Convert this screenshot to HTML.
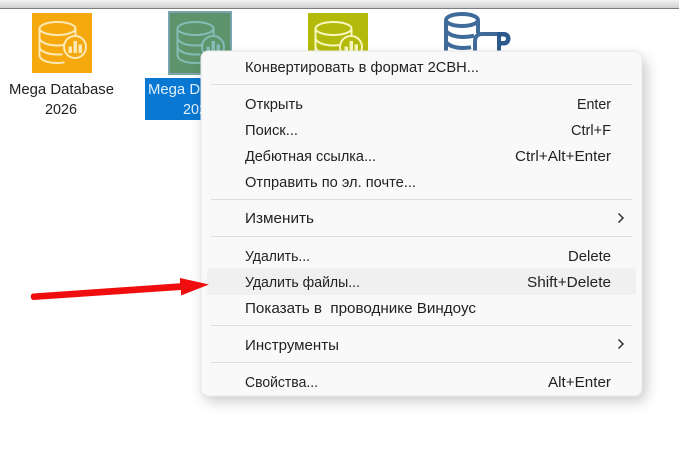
<!DOCTYPE html>
<html><head><meta charset="utf-8"><style>
html,body{margin:0;padding:0;background:#fff;width:679px;height:449px;overflow:hidden}
svg{display:block;position:absolute;left:0;top:0}
text{font-family:"Liberation Sans","DejaVu Sans",sans-serif;font-size:14.5px;fill:#222}
</style></head><body>
<svg width="679" height="449" viewBox="0 0 679 449" xmlns="http://www.w3.org/2000/svg">
<defs>
<linearGradient id="top" x1="0" y1="0" x2="0" y2="1"><stop offset="0" stop-color="#f3f3f3"/><stop offset="1" stop-color="#cfcfcf"/></linearGradient>
<filter id="sh" x="-10%" y="-10%" width="125%" height="125%"><feGaussianBlur stdDeviation="7"/></filter>
<g id="db" fill="none" stroke-width="2">
<ellipse cx="25.500" cy="15.500" rx="18" ry="6.500"/>
<path d="M7.500 15.500V42C7.500 47 15 50 25.500 50C28 50 30.500 49.800 32.500 49.300M7.500 24.500C7.500 29 15 32.500 25.500 32.500C28 32.500 29.500 32.300 31.500 32M7.500 33.500C7.500 38 15 41.500 25.500 41.500C27.500 41.500 29 41.400 30.500 41.200M43.500 15.500V22.500"/>
<circle cx="43" cy="34" r="11"/>
<path d="M36.500 40V33.500h3.500V40zM41.500 40V28h3.500v12zM46.500 40V31.500H50V40z" fill="currentColor" stroke="none"/>
</g>
</defs>
<rect x="0" y="0" width="679" height="8" fill="url(#top)"/>
<rect x="0" y="8" width="679" height="1" fill="#7d7d7d"/>

<rect x="32" y="13" width="60" height="60" fill="#f6a80f"/>
<use href="#db" x="32" y="13" stroke="#fde9b5" color="#fde9b5"/>
<text x="9" y="94" textLength="105" lengthAdjust="spacingAndGlyphs">Mega Database</text>
<text x="45" y="114" textLength="32" lengthAdjust="spacingAndGlyphs">2026</text>

<rect x="168" y="11" width="64" height="64" fill="#7ba5ae"/>
<rect x="170" y="13" width="60" height="60" fill="#5d946c"/>
<use href="#db" x="170" y="13" stroke="#83bdb8" color="#83bdb8"/>
<rect x="145" y="78" width="70" height="42" fill="#0978d2"/>
<text x="148" y="94" textLength="105" lengthAdjust="spacingAndGlyphs" style="fill:#dff0fb">Mega Database</text>
<text x="183" y="114" textLength="32" lengthAdjust="spacingAndGlyphs" style="fill:#dff0fb">2026</text>

<rect x="308" y="13" width="60" height="60" fill="#b4ba0b"/>
<use href="#db" x="308" y="13" stroke="#f8f7bd" color="#f8f7bd"/>

<g fill="none" stroke="#3f6b9a" stroke-width="4">
<ellipse cx="462" cy="20" rx="16" ry="6"/>
<path d="M446 20V53M478 20V33M446 31C449 35 456 37 462 37C467 37 471 36.500 474 35.500M446 42C449 46 456 48 462 48C465 48 468 47.800 471 47.300"/>
<path d="M475 54V42C475 37 477 34 482 34H499"/>
</g>
<path d="M497 32H504C508 32 510.500 35 510.500 38.500C510.500 42.500 508 45.500 504 45.500H501V54H497ZM501 36.500V41H503.500C505 41 506 40 506 38.700C506 37.400 505 36.500 503.500 36.500Z" fill="#2b5a8c" fill-rule="evenodd"/>

<rect x="204" y="58" width="442" height="343" rx="8" fill="#000" opacity=".22" filter="url(#sh)"/>
<rect x="201" y="51" width="441" height="345" rx="7" fill="#f9f9f9" stroke="#e8e8e8" stroke-width="1"/>

<g fill="#dedede">
<rect x="211" y="84" width="421" height="1"/>
<rect x="211" y="199" width="421" height="1"/>
<rect x="211" y="236" width="421" height="1"/>
<rect x="211" y="325" width="421" height="1"/>
<rect x="211" y="362" width="421" height="1"/>
</g>
<rect x="207" y="268" width="429" height="27" rx="4" fill="#f0f0f0"/>

<text x="245" y="72" textLength="234" lengthAdjust="spacingAndGlyphs">Конвертировать в формат 2CBH...</text>
<text x="245" y="109" textLength="58" lengthAdjust="spacingAndGlyphs">Открыть</text>
<text x="245" y="135" textLength="53" lengthAdjust="spacingAndGlyphs">Поиск...</text>
<text x="245" y="161" textLength="131" lengthAdjust="spacingAndGlyphs">Дебютная ссылка...</text>
<text x="245" y="187" textLength="171" lengthAdjust="spacingAndGlyphs">Отправить по эл. почте...</text>
<text x="245" y="223" textLength="69" lengthAdjust="spacingAndGlyphs">Изменить</text>
<text x="245" y="261" textLength="65" lengthAdjust="spacingAndGlyphs">Удалить...</text>
<text x="245" y="287" textLength="115" lengthAdjust="spacingAndGlyphs">Удалить файлы...</text>
<text x="245" y="313" textLength="231" lengthAdjust="spacingAndGlyphs" xml:space="preserve">Показать в  проводнике Виндоус</text>
<text x="245" y="350" textLength="94" lengthAdjust="spacingAndGlyphs">Инструменты</text>
<text x="245" y="387" textLength="73" lengthAdjust="spacingAndGlyphs">Свойства...</text>

<text x="577" y="109" textLength="34" lengthAdjust="spacingAndGlyphs">Enter</text>
<text x="571" y="135" textLength="40" lengthAdjust="spacingAndGlyphs">Ctrl+F</text>
<text x="515" y="161" textLength="96" lengthAdjust="spacingAndGlyphs">Ctrl+Alt+Enter</text>
<text x="568" y="261" textLength="43" lengthAdjust="spacingAndGlyphs">Delete</text>
<text x="527" y="287" textLength="84" lengthAdjust="spacingAndGlyphs">Shift+Delete</text>
<text x="548" y="387" textLength="63" lengthAdjust="spacingAndGlyphs">Alt+Enter</text>

<path d="M618.500 213.500L623 218L618.500 222.500M618.500 339.500L623 344L618.500 348.500" fill="none" stroke="#333" stroke-width="1.500"/>

<path d="M33 293.500L180 283.300V278L209 284.500L181 295.500V290L33.500 300C30 300 30 293.800 33 293.500Z" fill="#f00d0d"/>
</svg>
</body></html>
